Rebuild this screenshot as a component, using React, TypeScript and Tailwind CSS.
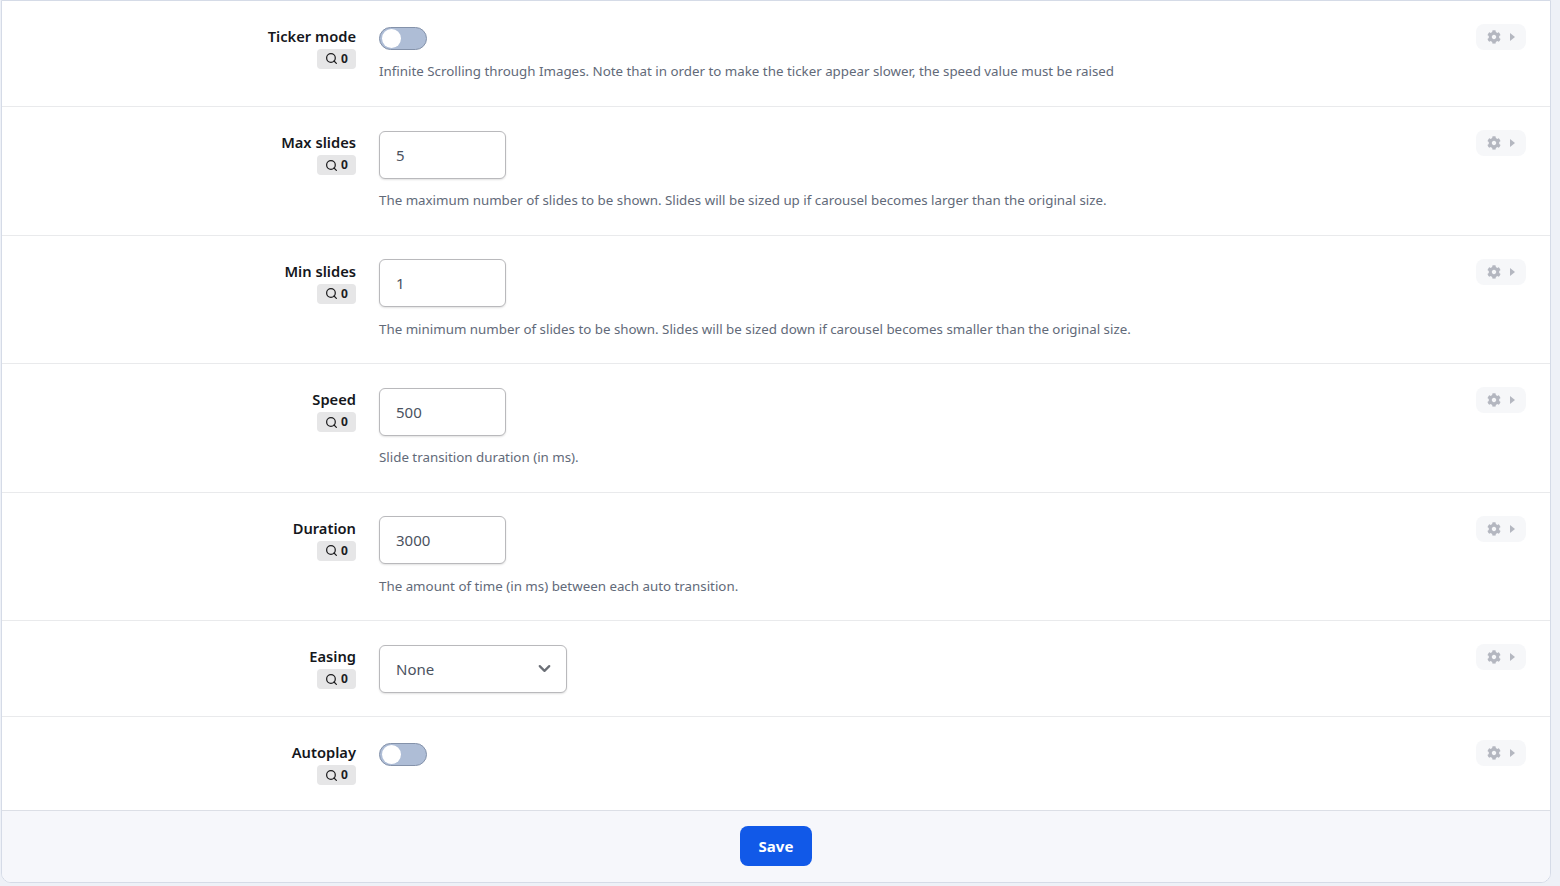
import React from "react";
import { Search, ChevronDown } from "lucide-react";
import { FaCog } from "react-icons/fa";

const Badge = () => (
    <div className="flex items-center justify-center gap-[3px] w-[39px] h-[20px] rounded-[4px] bg-[#e6e6e7] text-[#1d1d1f] text-[12px] font-bold">
        <Search size={13} strokeWidth={2.3} />
        <span>0</span>
    </div>
);

const Toggle = () => (
    <div className="w-[48px] h-[23px] rounded-full bg-[#aebdd6] border border-[#8492aa] flex items-center pl-[2px]">
        <div className="w-[19px] h-[19px] rounded-full bg-white" />
    </div>
);

const NumberInput = ({ value }: { value: string }) => (
    <div className="w-[127px] h-[48px] rounded-[6px] bg-white border border-[#b9b9bc] shadow-[0_1px_2px_rgba(0,0,0,0.12)] flex items-center px-[16px] text-[15px] text-[#4a5260]">
        {value}
    </div>
);

const GearButton = () => (
    <div className="-mt-[0.5px] w-[50px] h-[26px] rounded-[8px] bg-[#f6f7f9] flex items-center justify-center gap-[9px] text-[#b4b7c0]">
        <FaCog size={14} />
        <div className="w-0 h-0 border-y-[4px] border-y-transparent border-l-[5px] border-l-[#b4b7c0]" />
    </div>
);

type RowProps = {
    label: string;
    height: string;
    help?: string;
    children: React.ReactNode;
};

const Row = ({ label, height, help, children }: RowProps) => (
    <div className={`flex border-b border-[#e9eaec] pt-[23.5px] ${height}`}>
        <div className="w-[354px] shrink-0 pt-[0.4px] flex flex-col items-end gap-[2px]">
            <div className="text-[14.7px] leading-[22px] font-semibold text-[#15171c]">
                {label}
            </div>
            <Badge />
        </div>
        <div className="flex-1 pl-[23px]">
            {children}
            {help && (
                <p className="text-[13.33px] leading-[18px] text-[#626a79] mt-[12.5px]">
                    {help}
                </p>
            )}
        </div>
        <div className="pr-[24px]">
            <GearButton />
        </div>
    </div>
);

const App = () => {
    return (
        <div className="w-[1560px] h-[886px] overflow-hidden bg-[#eef1f7] font-['Noto_Sans',sans-serif]">
            <div className="ml-[1px] w-[1550px] h-[883px] bg-white border-x border-b border-t border-[#d5dbe7] rounded-b-[10px] overflow-hidden flex flex-col">
                <Row
                    label="Ticker mode"
                    height="h-[106.4px]"
                    help="Infinite Scrolling through Images. Note that in order to make the ticker appear slower, the speed value must be raised"
                >
                    <div className="pt-[2px]">
                        <Toggle />
                    </div>
                </Row>
                <Row
                    label="Max slides"
                    height="h-[128.5px]"
                    help="The maximum number of slides to be shown. Slides will be sized up if carousel becomes larger than the original size."
                >
                    <NumberInput value="5" />
                </Row>
                <Row
                    label="Min slides"
                    height="h-[128.5px]"
                    help="The minimum number of slides to be shown. Slides will be sized down if carousel becomes smaller than the original size."
                >
                    <NumberInput value="1" />
                </Row>
                <Row
                    label="Speed"
                    height="h-[128.5px]"
                    help="Slide transition duration (in ms)."
                >
                    <NumberInput value="500" />
                </Row>
                <Row
                    label="Duration"
                    height="h-[128.5px]"
                    help="The amount of time (in ms) between each auto transition."
                >
                    <NumberInput value="3000" />
                </Row>
                <Row label="Easing" height="h-[96px]">
                    <div className="w-[188px] h-[48px] rounded-[6px] bg-white border border-[#b9b9bc] shadow-[0_1px_2px_rgba(0,0,0,0.12)] flex items-center justify-between pl-[16px] pr-[12px] text-[15px] text-[#4a5260]">
                        None
                        <ChevronDown size={19} strokeWidth={2.8} className="text-[#6b6f76]" />
                    </div>
                </Row>
                <Row label="Autoplay" height="h-[93.6px]">
                    <div className="pt-[2px]">
                        <Toggle />
                    </div>
                </Row>
                <div className="relative -mt-px flex-1 bg-[#f6f7fb] border-t border-[#dcdfe6] flex items-center justify-center">
                    <button className="w-[72px] h-[40px] rounded-[8px] bg-[#1159e8] text-white text-[15px] font-bold">
                        Save
                    </button>
                </div>
            </div>
        </div>
    );
};

export default App;
